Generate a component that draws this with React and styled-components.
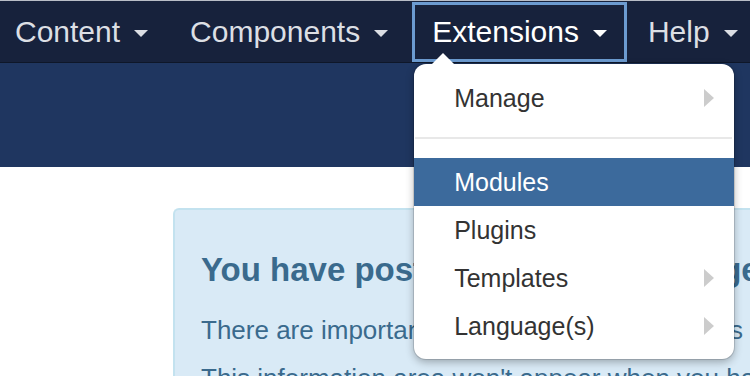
import React from 'react'
import styled, { createGlobalStyle } from 'styled-components'

const GlobalStyle = createGlobalStyle`
    html, body {
        margin: 0;
        padding: 0;
        background: #ffffff;
        overflow: hidden;
    }
    body {
        font-family: "Liberation Sans", Arial, sans-serif;
    }
`

const navItems = [
    { label: 'Content' },
    { label: 'Components' },
    { label: 'Extensions', active: true },
    { label: 'Help' },
]

const menuItems = [
    { label: 'Manage', sub: true },
    { divider: true },
    { label: 'Modules', active: true },
    { label: 'Plugins' },
    { label: 'Templates', sub: true },
    { label: 'Language(s)', sub: true },
]

const App = () => {
    return (
        <Page>
            <GlobalStyle />
            <Navbar>
                {navItems.map((item) => (
                    <NavItem key={item.label} $active={item.active}>
                        {item.label}
                        <Caret />
                        {item.active && (
                            <Dropdown>
                                {menuItems.map((m, i) =>
                                    m.divider ? (
                                        <Divider key={i} />
                                    ) : (
                                        <MenuItem key={m.label} $active={m.active}>
                                            {m.label}
                                            {m.sub && <SubArrow />}
                                        </MenuItem>
                                    )
                                )}
                            </Dropdown>
                        )}
                    </NavItem>
                ))}
            </Navbar>
            <Subhead />
            <Main>
                <Alert>
                    <AlertTitle>You have post-installation messages</AlertTitle>
                    <AlertText>There are important post-installation messages that require your attention.</AlertText>
                    <AlertText $next>This information area won't appear when you have hidden all the messages.</AlertText>
                </Alert>
            </Main>
        </Page>
    )
}

const Page = styled.div`
    width: 750px;
    height: 376px;
    overflow: hidden;
    position: relative;
`

const Navbar = styled.nav`
    display: flex;
    align-items: stretch;
    gap: 2px;
    height: 61px;
    margin-left: -5px;
    background: #17223c;
    border-top: 1px solid #b9bec7;
    border-bottom: 1px solid #0e1729;
    position: relative;
    z-index: 2;
`

const NavItem = styled.div`
    position: relative;
    display: flex;
    align-items: center;
    padding: 0 ${(p) => (p.$active ? '17px' : '20px')};
    font-size: 30px;
    color: ${(p) => (p.$active ? '#ffffff' : '#dcdfe4')};
    white-space: nowrap;
    border: ${(p) => (p.$active ? '3px solid #6c9bd0' : 'none')};
    margin: ${(p) => (p.$active ? '1px -1px 0 2px' : '0')};
`

const Caret = styled.span`
    display: inline-block;
    width: 0;
    height: 0;
    margin-left: 14px;
    margin-top: 3px;
    border-left: 7px solid transparent;
    border-right: 7px solid transparent;
    border-top: 7px solid currentColor;
`

const Dropdown = styled.div`
    position: absolute;
    top: 59px;
    left: -1px;
    width: 320px;
    padding: 10px 0 9px;
    background: #ffffff;
    border-radius: 12px;
    box-shadow: 0 3px 8px rgba(0, 0, 0, 0.3), 0 0 0 1px rgba(0, 0, 0, 0.12);
    z-index: 5;

    &::before {
        content: '';
        position: absolute;
        top: -11px;
        left: 17px;
        border-left: 12px solid transparent;
        border-right: 12px solid transparent;
        border-bottom: 12px solid #ffffff;
    }
`

const MenuItem = styled.div`
    display: flex;
    align-items: center;
    justify-content: space-between;
    height: 48px;
    padding: 0 20px 0 40px;
    font-size: 25px;
    color: ${(p) => (p.$active ? '#ffffff' : '#333333')};
    background: ${(p) => (p.$active ? '#3c6a9c' : 'transparent')};
`

const SubArrow = styled.span`
    width: 0;
    height: 0;
    border-top: 9px solid transparent;
    border-bottom: 9px solid transparent;
    border-left: 10px solid #cccccc;
`

const Divider = styled.div`
    height: 2px;
    margin: 15px 2px 19px 1px;
    background: #e8e8e8;
`

const Subhead = styled.div`
    height: 104px;
    background: #1f3660;
`

const Main = styled.div`
    padding: 41px 0 0 173px;
`

const Alert = styled.div`
    width: 900px;
    padding: 30px 26px;
    background: #d9eaf6;
    border: 2px solid #c3e2ef;
    border-right: none;
    border-radius: 6px 0 0 6px;
    color: #3a6a8d;
`

const AlertTitle = styled.h2`
    margin: 10px 0 0;
    font-size: 33px;
    font-weight: bold;
    line-height: 40px;
    white-space: nowrap;
`

const AlertText = styled.p`
    margin: ${(p) => (p.$next ? '18px' : '25px')} 0 0;
    font-size: 26px;
    line-height: 30px;
    white-space: nowrap;
`

export default App
